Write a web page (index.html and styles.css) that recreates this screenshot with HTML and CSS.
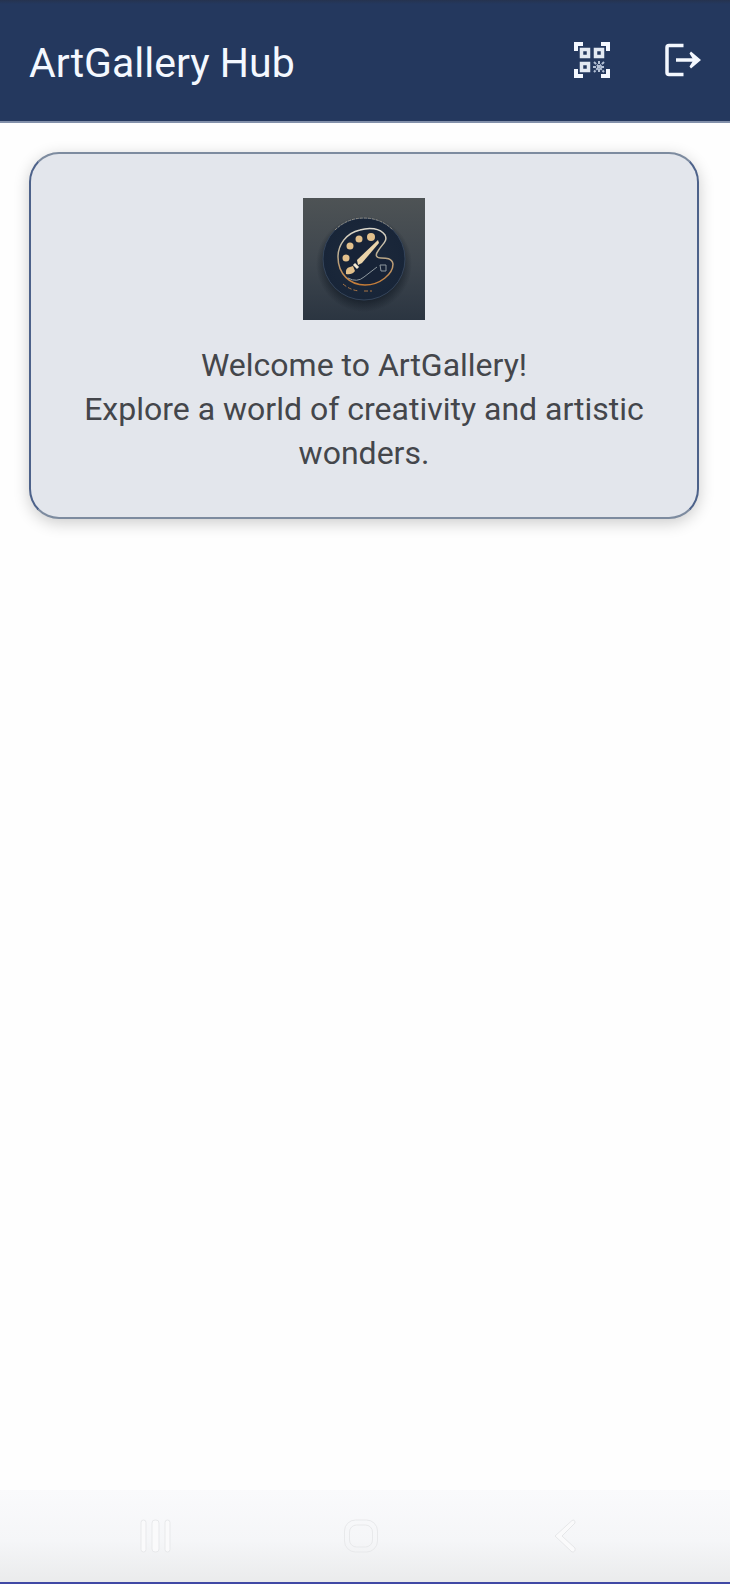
FILE: index.html
```html
<!DOCTYPE html>
<html lang="en">
<head>
<meta charset="utf-8">
<meta name="viewport" content="width=device-width, initial-scale=1">
<title>ArtGallery Hub</title>
<link rel="stylesheet" href="styles.css">
</head>
<body>
<header class="app-bar">
  <h1 class="app-title">ArtGallery Hub</h1>
  <div class="app-actions">
    <button class="icon-button" type="button" aria-label="Scan QR code">
      <svg class="action-icon" viewBox="0 0 36 36" fill="none" stroke="#f4f8ff">
        <path d="M2 9V2H9M27 2h7V9M34 27v7H27M9 34H2V27" stroke-width="4"/>
        <path d="M7.500 7.500h7v7h-7zM21.500 7.500h7v7h-7zM7.500 21.500h7v7h-7z" stroke="#e3e9f2" stroke-width="3.500"/>
        <path d="M20 20l10 10M30 20L20 30M25 19v12M19 25h12" stroke="#b4c1d6" stroke-width="2" stroke-dasharray="3 1"/>
      </svg>
    </button>
    <button class="icon-button" type="button" aria-label="Log out">
      <svg class="action-icon" viewBox="0 0 36 36" fill="none" stroke="#f4f8ff">
        <path d="M18.500 3.500H4Q2 3.500 2 5.500v25Q2 32.500 4 32.500H18.500" stroke-width="3.500"/>
        <path d="M11 18h21" stroke-width="3.500"/>
        <path d="M26 9.500L36 18L26 26.500L24.500 24.500L28.500 18L24.500 11.500Z" fill="#f4f8ff" stroke="none"/>
      </svg>
    </button>
  </div>
</header>
<main class="content">
  <section class="welcome-card">
    <svg class="logo" viewBox="0 0 122 122" role="img" aria-label="ArtGallery logo">
      <defs>
        <linearGradient id="tile" x1="0" y1="0" x2="0" y2="1">
          <stop offset="0" stop-color="#4e5355"/><stop offset=".55" stop-color="#3d454d"/><stop offset="1" stop-color="#2b3541"/>
        </linearGradient>
        <radialGradient id="disc"><stop offset="0" stop-color="#1d2a3c"/><stop offset="1" stop-color="#182538"/></radialGradient>
        <radialGradient id="shade"><stop offset=".75" stop-color="#111923" stop-opacity=".7"/><stop offset="1" stop-color="#111923" stop-opacity="0"/></radialGradient>
        <linearGradient id="gold" x1="0" y1="0" x2="0" y2="1">
          <stop offset="0" stop-color="#dcd9cd"/><stop offset=".5" stop-color="#b9a98b"/><stop offset="1" stop-color="#c67b35"/>
        </linearGradient>
      </defs>
      <path fill="url(#tile)" d="M0 0h122v122H0z"/>
      <circle cx="61" cy="66" r="48" fill="url(#shade)"/>
      <circle cx="61" cy="61" r="41" fill="url(#disc)" stroke="#34445a"/>
      <path d="M32 32Q44 20 61 20Q78 20 90 32" fill="none" stroke="#8f8c83" stroke-width="1" stroke-dasharray="3 1"/>
      <path d="M75 53C80 45 85 43 82 37C77 30 66 29 57 32C43 35 35 47 35 59C35 76 47 87 62 87C77 87 90 76 90 66C89 60 83 60 78 60C73 60 72 57 75 53Z" fill="#172337" stroke="url(#gold)" stroke-width="1.500"/>
      <g fill="#e2c08c"><circle cx="47" cy="48" r="3.500"/><circle cx="56" cy="41" r="3.500"/><circle cx="68" cy="39" r="4"/><circle cx="43" cy="60" r="3.500"/><path d="M43 76Q42 70 47 69L50 68L52 73Q49 77 43 76Z"/></g>
      <path d="M75 42L76 45L59 65L55 67L54 62Z" fill="#ebd4aa"/>
      <path d="M51 66L55 70" stroke="#f5ead2" stroke-width="3"/>
      <path d="M45 80Q54 85 61 79L74 69M77 67h6v6h-5z" fill="none" stroke="#8e989e"/>
      <path d="M40 86Q47 92 56 93M61 93h8" fill="none" stroke="#a97546" stroke-width="1" stroke-dasharray="4 2"/>
    </svg>
    <p class="welcome-text">Welcome to ArtGallery!<br>Explore a world of creativity and artistic wonders.</p>
  </section>
</main>
<nav class="system-nav" aria-label="System navigation">
  <button class="nav-button" type="button" aria-label="Recent apps">
    <svg class="nav-icon" viewBox="0 0 36 36" fill="#fafafb" stroke="#e8e9eb"><rect x="3" y="2" width="5" height="32" rx="2.500"/><rect x="14" y="2" width="7" height="32" rx="3"/><rect x="27" y="2" width="5" height="32" rx="2.500"/></svg>
  </button>
  <button class="nav-button" type="button" aria-label="Home">
    <svg class="nav-icon" viewBox="0 0 36 36" fill="none" stroke="#e8e9eb"><rect x="1.500" y="2" width="33" height="32" rx="11"/><rect x="6.500" y="7" width="23" height="22" rx="7"/></svg>
  </button>
  <button class="nav-button" type="button" aria-label="Back">
    <svg class="nav-icon" viewBox="0 0 36 36" fill="#fafafb" stroke="#e6e7e9"><path d="M24 2.500L7 18L24 34Q28 34 27 30L14 18L27 5Q27 1 24 2.500Z"/></svg>
  </button>
</nav>
</body>
</html>
```
FILE: styles.css
```css
* { box-sizing: border-box; }
body {
  margin: 0;
  min-height: 100vh;
  display: flex;
  flex-direction: column;
  background: #fefefe;
  font-family: Roboto, "Liberation Sans", sans-serif;
}
button { padding: 0; border: 0; background: none; }
svg { display: block; }
.app-bar {
  display: flex;
  align-items: flex-start;
  justify-content: space-between;
  padding: 34px 29px 33px;
  background: linear-gradient(#26334f, #24385e 4px);
  border-bottom: 2px solid #8290aa;
}
.app-title {
  margin: 0;
  padding-top: 4px;
  color: #f4f8ff;
  font-size: 41px;
  font-weight: 400;
  line-height: 50px;
}
.app-actions { display: flex; gap: 55px; }
.icon-button {
  display: flex;
  align-items: center;
  width: 36px;
  height: 52px;
}
.action-icon { width: 36px; height: 36px; }
.content { flex: 1; padding: 29px 31px 29px 29px; }
.welcome-card {
  display: flex;
  flex-direction: column;
  align-items: center;
  gap: 23px;
  padding: 44px 36px 42px;
  border: 2px solid #7d8b9f;
  border-left-color: #4d628a;
  border-right-color: #4d628a;
  border-radius: 30px;
  background: #e3e6ec;
  box-shadow: 0 4px 16px rgb(0 0 0 / 20%);
}
.logo { width: 122px; height: 122px; }
.welcome-text {
  margin: 0;
  color: #44464b;
  font-size: 32px;
  line-height: 44px;
  text-align: center;
}
.system-nav {
  display: flex;
  justify-content: center;
  gap: 169px;
  padding: 28px 9px 28px 0;
  background: linear-gradient(#fafafc, #f5f6f8 55%, #eaebec);
  border-bottom: 2px solid #4049a5;
}
.nav-button, .nav-icon { width: 36px; height: 36px; }
```
